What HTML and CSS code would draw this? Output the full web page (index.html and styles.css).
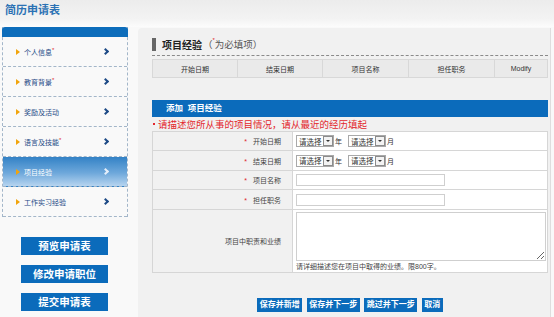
FILE: index.html
```html
<!DOCTYPE html>
<html>

<head>
    <meta charset="utf-8">
    <link rel="stylesheet" href="styles.css">
</head>

<body>

    <header class="top">
        <h1>简历申请表</h1>
    </header>

    <div class="layout">

        <aside class="side">
            <div class="menu">
                <div class="menu-top"></div>
                <ul>
                    <li><span class="tri"></span>个人信息<em>*</em><span class="chev"></span></li>
                    <li><span class="tri"></span>教育背景<em>*</em><span class="chev"></span></li>
                    <li><span class="tri"></span>奖励及活动<span class="chev"></span></li>
                    <li><span class="tri"></span>语言及技能<em>*</em><span class="chev"></span></li>
                    <li class="active"><span class="tri"></span>项目经验<span class="chev"></span></li>
                    <li><span class="tri"></span>工作实习经验<span class="chev"></span></li>
                </ul>
            </div>
            <div class="side-btns">
                <a href="#">预览申请表</a>
                <a href="#">修改申请职位</a>
                <a href="#">提交申请表</a>
            </div>
        </aside>

        <main class="main">
            <div class="sec-title">
                <h2>项目经验</h2>
                <span class="note">（<em>*</em>为必填项）</span>
            </div>

            <table class="list">
                <tr>
                    <th class="c1">开始日期</th>
                    <th class="c2">结束日期</th>
                    <th class="c3">项目名称</th>
                    <th class="c4">担任职务</th>
                    <th class="c5">Modify</th>
                </tr>
            </table>

            <div class="bar">添加&nbsp;&nbsp;项目经验</div>
            <p class="tip"><span class="dot"></span>请描述您所从事的项目情况，请从最近的经历填起</p>

            <table class="form">
                <tr class="r1">
                    <td class="label"><em>*</em>开始日期</td>
                    <td class="val">
                        <span class="sel">请选择<span class="arr"></span></span><span class="unit">年</span>
                        <span class="sel">请选择<span class="arr"></span></span><span class="unit">月</span>
                    </td>
                </tr>
                <tr class="r2">
                    <td class="label"><em>*</em>结束日期</td>
                    <td class="val">
                        <span class="sel">请选择<span class="arr"></span></span><span class="unit">年</span>
                        <span class="sel">请选择<span class="arr"></span></span><span class="unit">月</span>
                    </td>
                </tr>
                <tr class="r1">
                    <td class="label"><em>*</em>项目名称</td>
                    <td class="val"><input type="text" class="txt"></td>
                </tr>
                <tr class="r2">
                    <td class="label"><em>*</em>担任职务</td>
                    <td class="val"><input type="text" class="txt"></td>
                </tr>
                <tr class="r5">
                    <td class="label">项目中职责和业绩</td>
                    <td class="val">
                        <textarea class="area"></textarea>
                        <div class="hint">请详细描述您在项目中取得的业绩。限800字。</div>
                    </td>
                </tr>
            </table>

            <div class="actions">
                <a href="#">保存并新增</a>
                <a href="#">保存并下一步</a>
                <a href="#">跳过并下一步</a>
                <a href="#">取消</a>
            </div>
        </main>

    </div>

</body>

</html>
```

FILE: styles.css
```css
body {
    margin: 0;
    width: 554px;
    height: 317px;
    overflow: hidden;
    background-color: #f9f9f9;
    font-family: "Liberation Sans", "Noto Sans CJK SC", sans-serif;
    font-size: 7px;
    color: #333;
}

em {
    font-style: normal;
    color: #e0262b;
}

/* header */
.top {
    height: 27px;
    padding-left: 5px;
    background: linear-gradient(#ececec, #f3f3f3 70%, #fcfcfc);
}

.top h1 {
    margin: 0;
    font-size: 11px;
    line-height: 21px;
    font-weight: bold;
    color: #2b72b4;
}

.layout {
    display: flex;
}

/* left menu */
.side {
    width: 136px;
    padding-left: 2px;
}

.menu {
    width: 124px;
    border-left: 1px dashed #a3b6c9;
    border-right: 1px dashed #a3b6c9;
}

.menu-top {
    height: 10px;
    margin: 0 -1px;
    background-color: #0d6dbb;
    border-radius: 3px 3px 0 0;
}

.menu ul {
    list-style-type: none;
    margin: 0;
    padding: 0;
}

.menu li {
    display: flex;
    align-items: center;
    height: 29px;
    padding-left: 13px;
    border-bottom: 1px dashed #a3b6c9;
    color: #1d4a86;
}

.menu li em {
    font-size: 6px;
    align-self: flex-start;
    margin-top: 10px;
}

.tri {
    width: 0;
    height: 0;
    margin-right: 4px;
    border-left: 4px solid #f1a40c;
    border-top: 3px solid transparent;
    border-bottom: 3px solid transparent;
}

.chev {
    width: 3px;
    height: 3px;
    margin-left: auto;
    margin-right: 19px;
    border-top: 2px solid #1d4a86;
    border-right: 2px solid #1d4a86;
    transform: rotate(45deg);
}

.menu li.active {
    color: #fff;
    background: linear-gradient(#3382c6, #6ea8db 55%, #b6d4ef);
}

.menu li.active .chev {
    border-color: #e4eefa;
}

.side-btns {
    display: flex;
    flex-direction: column;
    gap: 10px;
    margin: 20px 0 0 19px;
}

.side-btns a {
    width: 87px;
    height: 18px;
    line-height: 18px;
    text-align: center;
    text-decoration: none;
    background-color: #0b6bbb;
    color: #fff;
    font-size: 10.5px;
    font-weight: bold;
}

/* main panel */
.main {
    flex: 1;
    height: 280px;
    margin: 1px 3px 0 0;
    padding: 9px 2px 0 14px;
    background-color: #f1f1f1;
    border-right: 1px solid #dedede;
    border-radius: 4px 0 0 0;
}

.sec-title {
    display: flex;
    align-items: center;
    height: 14px;
    padding-bottom: 4px;
    border-bottom: 1px dashed #8a8a8a;
}

.sec-title::before {
    content: "";
    width: 4px;
    height: 13px;
    margin-right: 6px;
    background-color: #666;
}

.sec-title h2 {
    margin: 0;
    font-size: 10px;
    font-weight: bold;
    color: #222;
}

.sec-title .note {
    margin-left: 1px;
    font-size: 9.5px;
    color: #555;
}

.sec-title .note em {
    font-size: 6px;
    vertical-align: top;
}

table {
    width: 396px;
    border-collapse: collapse;
}

.list {
    margin-top: 3px;
}

.list th {
    height: 17px;
    padding: 0;
    border: 1px solid #d8d8d8;
    background-color: #eaeaea;
    font-weight: normal;
    color: #333;
}

.list .c1,
.list .c2 {
    width: 84px;
}

.list .c3,
.list .c4 {
    width: 85px;
}

.bar {
    margin-top: 22px;
    height: 17px;
    line-height: 17px;
    padding-left: 14px;
    background-color: #0b6bbb;
    color: #fff;
    font-size: 8.5px;
    font-weight: bold;
}

.tip {
    display: flex;
    align-items: center;
    margin: 0;
    height: 14px;
    color: #e3262c;
    font-size: 9.5px;
}

.tip .dot {
    width: 2px;
    height: 2px;
    margin: 0 3px 0 1px;
    background-color: #e3262c;
}

.form td {
    padding: 0;
    border: 1px solid #d6d6d6;
}

.form .label {
    width: 128px;
    padding-right: 11px;
    text-align: right;
    background-color: #f1f1f1;
    color: #444;
}

.form .label em {
    margin-right: 6px;
}

.form .val {
    padding-left: 3px;
    background-color: #fff;
}

.form .r1 {
    height: 19px;
}

.form .r2 {
    height: 20px;
}

.form .r5 {
    height: 62px;
}

.sel {
    display: inline-flex;
    align-items: center;
    box-sizing: border-box;
    width: 38px;
    height: 12px;
    padding-left: 2px;
    vertical-align: middle;
    border: 1px solid #a9a9a9;
    background-color: #fff;
    font-size: 7.5px;
    color: #333;
}

.sel .arr {
    position: relative;
    box-sizing: border-box;
    width: 10px;
    height: 10px;
    margin-left: auto;
    border: 1px solid #8c8c8c;
    background-color: #f3f3f3;
}

/* little arrow inside the dropdown box */
.sel .arr::after {
    content: "";
    position: absolute;
    left: 2px;
    top: 3px;
    border-top: 2px solid #333;
    border-left: 2px solid transparent;
    border-right: 2px solid transparent;
}

.unit {
    margin: 0 4px 0 1px;
    vertical-align: middle;
}

.txt {
    display: block;
    box-sizing: border-box;
    width: 149px;
    height: 12px;
    margin: 0;
    padding: 0;
    border: 1px solid #cfcfcf;
}

.area {
    display: block;
    box-sizing: border-box;
    width: 250px;
    height: 49px;
    margin: 2px 0 0 0;
    border: 1px solid #cfcfcf;
}

.hint {
    height: 11px;
    line-height: 11px;
    color: #444;
}

.actions {
    display: flex;
    justify-content: center;
    gap: 4.5px;
    width: 396px;
    margin-top: 25px;
}

.actions a {
    height: 14px;
    line-height: 14px;
    padding: 0 2.5px;
    text-decoration: none;
    background-color: #0b6bbb;
    color: #fff;
    font-size: 8px;
    font-weight: bold;
}
```
